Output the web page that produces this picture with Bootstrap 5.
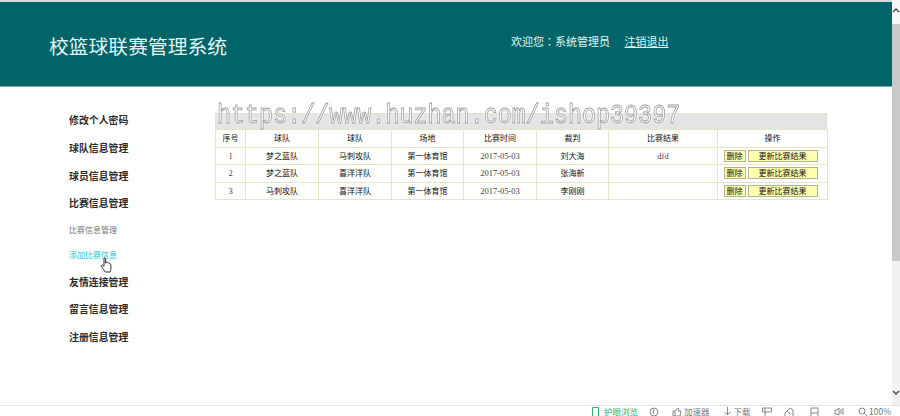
<!DOCTYPE html>
<html lang="zh-CN">
<head>
<meta charset="utf-8">
<link href="https://cdn.jsdelivr.net/npm/bootstrap@5.3.0/dist/css/bootstrap.min.css" rel="stylesheet">
<style>
html,body{height:416px;overflow:hidden;background:#fff}
body{font-family:"Liberation Serif","Noto Sans CJK SC",serif;color:#222}
.shell{height:416px}
.mainpane{min-width:0;width:892px}
.topstrip{height:2px;background:#d5dcdc}
.brandbar{height:85px;background:#006468;color:#e4f4f2;padding-left:49px;border-bottom:1px solid #7fa9aa}
.brandname{width:462px;font:19.8px/1 "Noto Sans CJK SC",sans-serif;margin:4px 0 0}
.userzone{font:11px/1 "Noto Sans CJK SC",sans-serif;margin-top:-5px}
.userzone a{color:#e4f4f2;margin-left:12px}
.colonmark{font-family:"Noto Sans CJK TC",sans-serif}
.bodyzone{height:318px;position:relative}
.sidemenu{width:215px;padding:27px 0 0 69px;font-family:"Noto Sans CJK SC",sans-serif}
.sidemenu a{display:block;text-decoration:none;color:#2c2c2c;font-size:9.9px;font-weight:700;line-height:12px;margin-bottom:15.8px}
.sidemenu a.tightitem{margin-bottom:14.8px}
.sidemenu a.subitem{font-size:8px;font-weight:400;color:#777;margin-bottom:13px}
.sidemenu a.subhot{color:#22c7cf;margin-bottom:14.5px}
.sidemenu a.wideitem{margin-bottom:15.8px}
.hand{position:absolute;left:100px;top:170px}
.tablezone{width:612px;padding-top:26px}
.greyhead{height:16px;background:#e4e4e4;border:1px solid #e3e3c8;border-bottom:0}
.scoretable{width:612px;table-layout:fixed;border-collapse:collapse;font:8px/1 "Noto Sans CJK SC",sans-serif;color:#111;margin:0}
.scoretable td,.scoretable th{border:1px solid #e6e6c4;text-align:center;padding:0;height:17.5px;font-weight:400;vertical-align:middle}
.scoretable .dateval,.scoretable .numval{font-family:"Liberation Serif",serif;color:#444;font-size:8.5px}
.scoretable .actcell{padding-right:4px}
.actbtn{display:inline-block;background:#ffffb0;border:1px solid #b4b494;border-radius:0;color:#111;font:8px/10px "Noto Sans CJK SC",sans-serif;height:12px;padding:0;vertical-align:middle}
.btnshort{width:22px;margin-right:2px}
.btnlong{width:70px}
.stamp{position:absolute;left:217px;top:18px;font:23.4px/1 "Liberation Mono",monospace;color:rgba(255,255,255,.55);-webkit-text-stroke:.7px #9c9c9c;text-shadow:0 0 3px #fff;white-space:nowrap;pointer-events:none;transform:scaleY(1.2);will-change:transform}
.statusline{height:11px;border-top:1px solid #e4e4e4;background:#fff;font:8.5px/10px "Noto Sans CJK SC",sans-serif;color:#777;position:relative;white-space:nowrap}
.statusline svg{flex:none;fill:none;stroke:#888;stroke-width:1}
.statusline .safe{color:#35b36a;gap:5px}
.statusline .safe svg{stroke:#35b36a}
.sitem{display:flex;align-items:center;gap:2px}
.sitem1{margin-left:592px}.sitem2{margin-left:11px}.sitem3{margin-left:13px}.sitem4{margin-left:13px}.sitem5{margin-left:11.5px}.sitem6{margin-left:12px}.sitem7{margin-left:16px}.sitem8{margin-left:15px}.sitem9{margin-left:14px}
.rail{width:8px;background:#f1f1f1;height:405px}
.railcap{height:24px;background:#f7f7f7;display:flex;align-items:center;justify-content:center;padding-bottom:3px}
.railthumb{height:237px;background:#c9c9c9}
.railrest{flex:1}
.railend{height:24px;display:flex;align-items:flex-end;justify-content:center;padding-bottom:10px}
.rail svg{fill:none;stroke:#444;stroke-width:1.4}
</style>
</head>
<body>
<div class="shell d-flex flex-column">
  <div class="d-flex flex-grow-1">
    <div class="mainpane">
      <div class="topstrip"></div>
      <header class="brandbar d-flex align-items-center">
        <h1 class="brandname">校篮球联赛管理系统</h1>
        <div class="userzone">欢迎您<span class="colonmark" lang="zh-TW">：</span>系统管理员 <a href="#">注销退出</a></div>
      </header>
      <div class="bodyzone d-flex">
        <nav class="sidemenu">
          <a href="#">修改个人密码</a>
          <a href="#">球队信息管理</a>
          <a href="#">球员信息管理</a>
          <a href="#" class="tightitem">比赛信息管理</a>
          <a href="#" class="subitem">比赛信息管理</a>
          <a href="#" class="subitem subhot">添加比赛信息</a>
          <a href="#" class="wideitem">友情连接管理</a>
          <a href="#">留言信息管理</a>
          <a href="#">注册信息管理</a>
        </nav>
        <svg class="hand" width="13" height="16" viewBox="0 0 13 16"><path d="M4 1.2c.7-.6 1.6-.2 1.6.7v4.3l.3-1c.8-.5 1.5-.2 1.6.6.7-.5 1.5-.2 1.6.6.8-.3 1.5.1 1.6.9l.3 4c0 1.5-.6 2.6-1 3.7H5.2C4.4 13.2 2.6 11.5 1.3 9.3c-.5-1 .6-1.7 1.4-1L4 9.5V2z" fill="#fff" stroke="#333" stroke-width="1"/></svg>
        <main class="tablezone">
          <div class="greyhead"></div>
          <table class="scoretable">
            <colgroup><col style="width:30px"><col style="width:73px"><col style="width:73px"><col style="width:72px"><col style="width:73px"><col style="width:72px"><col style="width:109px"><col style="width:110px"></colgroup>
            <tr><th>序号</th><th>球队</th><th>球队</th><th>场地</th><th>比赛时间</th><th>裁判</th><th>比赛结果</th><th>操作</th></tr>
            <tr><td class="numval">1</td><td>梦之蓝队</td><td>马刺攻队</td><td>第一体育馆</td><td class="dateval">2017-05-03</td><td>刘大海</td><td class="dateval">dfd</td><td class="actcell"><button class="actbtn btnshort">删除</button><button class="actbtn btnlong">更新比赛结果</button></td></tr>
            <tr><td class="numval">2</td><td>梦之蓝队</td><td>喜洋洋队</td><td>第一体育馆</td><td class="dateval">2017-05-03</td><td>张海新</td><td></td><td class="actcell"><button class="actbtn btnshort">删除</button><button class="actbtn btnlong">更新比赛结果</button></td></tr>
            <tr><td class="numval">3</td><td>马刺攻队</td><td>喜洋洋队</td><td>第一体育馆</td><td class="dateval">2017-05-03</td><td>李刚刚</td><td></td><td class="actcell"><button class="actbtn btnshort">删除</button><button class="actbtn btnlong">更新比赛结果</button></td></tr>
          </table>
        </main>
        <div class="stamp">https://www.huzhan.com/ishop39397</div>
      </div>
    </div>
    <div class="rail d-flex flex-column">
      <div class="railcap"><svg width="8" height="5" viewBox="0 0 8 5"><path d="M1 4l3-3 3 3"/></svg></div><div class="railthumb"></div><div class="railrest"></div><div class="railend"><svg width="8" height="5" viewBox="0 0 8 5"><path d="M1 1l3 3 3-3"/></svg></div>
    </div>
  </div>
  <footer class="statusline d-flex">
    <span class="sitem sitem1 safe"><svg width="7" height="9" viewBox="0 0 7 9"><path d="M.5 9V.5h6V9"/></svg>护眼浏览</span>
    <span class="sitem sitem2"><svg width="10" height="9" viewBox="0 0 10 9"><circle cx="5" cy="5" r="4"/><path d="M5 2l-1 5"/></svg></span>
    <span class="sitem sitem3"><svg width="10" height="9" viewBox="0 0 10 9"><path d="M1 4h2v5H1zM3 4l3-3 1 1-1 2h3l-1 5H3"/></svg>加速器</span>
    <span class="sitem sitem4"><svg width="9" height="9" viewBox="0 0 9 9"><path d="M4.5 0v8M1.5 5l3 3 3-3"/></svg>下载</span>
    <span class="sitem sitem5"><svg width="10" height="9" viewBox="0 0 10 9"><path d="M.5 1h9v4h-9zM3 1v8"/></svg></span>
    <span class="sitem sitem6"><svg width="10" height="9" viewBox="0 0 10 9"><path d="M1 9V6l5-5 3 2v6M3 4l3 3"/></svg></span>
    <span class="sitem sitem7"><svg width="9" height="9" viewBox="0 0 9 9"><path d="M1 1h7v8M1 1v8M1 6h7"/></svg></span>
    <span class="sitem sitem8"><svg width="10" height="9" viewBox="0 0 10 9"><path d="M1 3h2l2-2v7L3 7H1zM7 2v5M9 1v7"/></svg></span>
    <span class="sitem sitem9"><svg width="9" height="9" viewBox="0 0 9 9"><circle cx="4" cy="4" r="3"/><path d="M6 6l3 3"/></svg>100%</span>
  </footer>
</div>
</body>
</html>
